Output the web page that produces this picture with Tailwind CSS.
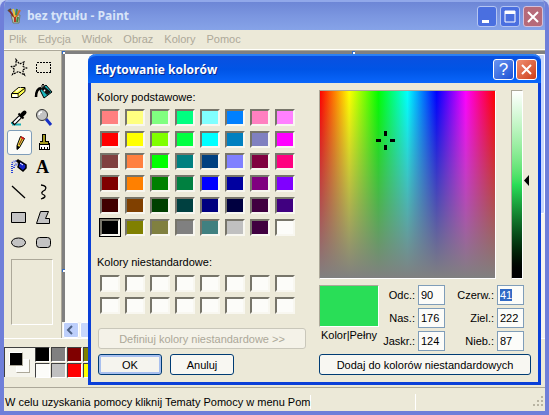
<!DOCTYPE html>
<html lang="pl">

<head>
    <meta charset="UTF-8">
    <meta name="viewport" content="width=device-width, initial-scale=1.0">
    <title>bez tytułu - Paint</title>

    <!-- Tailwind CSS -->
    <script src="https://cdn.jsdelivr.net/npm/@tailwindcss/browser@4"></script>
</head>

<body class="bg-[#c9d6f5] text-black text-[11px] leading-[14px] font-['Liberation_Sans',Arial,sans-serif]">

    <!-- Paint window -->
    <div class="relative min-h-screen flex flex-col overflow-hidden rounded-t-lg border-x-4 border-b-4 border-[#6f7fd9] bg-[#ece9d8]">

        <!-- Title bar -->
        <header class="-mx-1 h-[30px] flex items-center gap-1 pl-[7px] pr-[6px] bg-linear-to-b from-[#6d86d6] via-[#7b96e0] to-[#86a3e8] border-t-2 border-[#91a8ea]">
            <svg class="w-4 h-4" viewBox="0 0 16 16">
                <path d="M4 7h9l-1 8H6z" fill="#b9c9b0" stroke="#6d7a70" />
                <path d="M2 2l5 7" stroke="#8b2a20" stroke-width="2" />
                <path d="M1 3l3-2" stroke="#5a4a3a" stroke-width="2" />
                <path d="M6 1l2 8" stroke="#e8c53b" stroke-width="2" />
                <path d="M13 2l-4 7" stroke="#d06b27" stroke-width="2" />
                <path d="M10 1l-1 6" stroke="#438b45" stroke-width="2" />
                <path d="M8 9v5" stroke="#b8371f" stroke-width="2" />
                <path d="M11 9l-1 5" stroke="#47823b" stroke-width="2" />
            </svg>
            <h1 class="grow text-[12px] leading-4 font-bold text-[#d8e4f8] font-['Open_Sans',sans-serif]">bez tytułu - Paint</h1>
            <div class="flex gap-[3px]">
                <button aria-label="Minimalizuj" class="w-5 h-[21px] rounded-[3px] border border-[#b5c5f2] bg-[#4a6fe0]">
                    <svg class="w-[18px] h-[19px]" viewBox="0 0 18 19"><path d="M4 13h7v3H4z" fill="#fff" /></svg>
                </button>
                <button aria-label="Maksymalizuj" class="w-5 h-[21px] rounded-[3px] border border-[#b5c5f2] bg-[#4a6fe0]">
                    <svg class="w-[18px] h-[19px]" viewBox="0 0 18 19"><path d="M4 4h10v11H4z" fill="none" stroke="#fff" /><path d="M4 4h10v3H4z" fill="#fff" /></svg>
                </button>
                <button aria-label="Zamknij" class="w-5 h-[21px] rounded-[3px] border border-[#d3c0dc] bg-[#b66a79]">
                    <svg class="w-[18px] h-[19px]" viewBox="0 0 18 19"><path d="M4 5l10 10M14 5L4 15" stroke="#fff" stroke-width="2" /></svg>
                </button>
            </div>
        </header>

        <!-- Menu bar -->
        <nav class="h-5 flex items-center gap-[11px] px-[5px] pb-0.5 text-[#aca899] border-b border-[#fffffb]">
            <button>Plik</button>
            <button>Edycja</button>
            <button>Widok</button>
            <button>Obraz</button>
            <button>Kolory</button>
            <button>Pomoc</button>
        </nav>

        <!-- Toolbox and canvas -->
        <main class="grow flex border-t border-[#aca899] min-h-[286px]">
            <aside class="w-[58px] shrink-0 pt-1 pl-[3px] border-r border-[#aca899]">
                <div class="grid grid-cols-[25px_25px] auto-rows-[25px]">
                    <button aria-label="Zaznaczanie dowolnego kształtu">
                        <svg class="w-[25px] h-[25px]" viewBox="0 0 25 25"><path d="M9 4.500l3.500 4.500 4.500-2-1 4.500 3.500 1.500-4 2 2 5-6-3.500-6 3 2-5-3-3 4.500-.5z" fill="none" stroke="#000" stroke-width="1.200" stroke-dasharray="2 1" /></svg>
                    </button>
                    <button aria-label="Zaznaczenie">
                        <svg class="w-[25px] h-[25px]" viewBox="0 0 25 25" shape-rendering="crispEdges"><path d="M4.500 7.500h14v10h-14z" fill="none" stroke="#000" stroke-dasharray="2 1" /></svg>
                    </button>
                    <button aria-label="Gumka">
                        <svg class="w-[25px] h-[25px]" viewBox="0 0 25 25"><path d="M4.500 13.500l7-6h6.500v4l-7 6H4.500z" fill="#ffff50" stroke="#000" /><path d="M5 13.500h6l7-5.500M11 13.500V17" fill="none" stroke="#000" /><path d="M5.500 14.500h5v2.500h-5z" fill="#fff" /><path d="M9 11.500l5-3.500" stroke="#fffbd0" stroke-width="2" /></svg>
                    </button>
                    <button aria-label="Wypełnianie kolorem">
                        <svg class="w-[25px] h-[25px]" viewBox="0 0 25 25"><path d="M8 10l6-5 6 7-8 6z" fill="#1ab6bb" stroke="#000" /><path d="M9 9l6 6 4-3-6-5z" fill="#111" /><path d="M12 11V5q-1-2-2 0v4" fill="none" stroke="#000" /><path d="M9 8q-5 1-5 9" fill="none" stroke="#000" stroke-width="2.500" /><path d="M12 10l1 1" stroke="#fff" stroke-width="2" /></svg>
                    </button>
                    <button aria-label="Pobieranie koloru">
                        <svg class="w-[25px] h-[25px]" viewBox="0 0 25 25"><path d="M5 19.500h9M4 18h3" stroke="#18b0b6" stroke-width="2" /><path d="M14 11l-8 8" stroke="#000" stroke-width="4" /><path d="M13 12l-6 6" stroke="#fff" stroke-width="2" /><path d="M11.500 8.500l5 5" stroke="#000" stroke-width="2" /><path d="M15 10l2.500-2.500" stroke="#000" stroke-width="4" stroke-linecap="round" /></svg>
                    </button>
                    <button aria-label="Lupa">
                        <svg class="w-[25px] h-[25px]" viewBox="0 0 25 25"><path d="M14 14l5 6" stroke="#1730c5" stroke-width="3" /><circle cx="10" cy="10" r="5.500" fill="#c3c3c3" stroke="#333" /><path d="M7 10q0-3 3-3" fill="none" stroke="#fff" stroke-width="1.500" /></svg>
                    </button>
                    <button aria-label="Ołówek" class="rounded-[3px] border border-[#7f9db9] bg-[#fbfbf8]">
                        <svg class="w-[23px] h-[23px]" viewBox="0 0 23 23"><path d="M12.500 5.500l4 2-5 9-2.500 2v-4z" fill="#f5e443" stroke="#000" /><path d="M13 6l3 2" stroke="#d41818" stroke-width="2" /><path d="M9 14v4.500l3-2" fill="#000" /><path d="M14 8l-3 6" stroke="#7b2020" /></svg>
                    </button>
                    <button aria-label="Pędzel">
                        <svg class="w-[25px] h-[25px]" viewBox="0 0 25 25" shape-rendering="crispEdges"><path d="M10 4h4v7h3v2h1v7H7v-7h1v-2h2z" fill="#000" /><path d="M11 5h2v7h3v2H8v-2h3z" fill="#a39a22" /><path d="M8 15h9v4h-1v-2h-1v2h-2v-2h-1v2h-2v-2H9v2H8z" fill="#fff" /></svg>
                    </button>
                    <button aria-label="Aerograf">
                        <svg class="w-[25px] h-[25px]" viewBox="0 0 25 25"><path d="M5 18V9q0-3 6-3M7 13q0-4 4-4" fill="none" stroke="#2743d8" stroke-width="2" stroke-dasharray="1 1" /><path d="M10 5l3 3" stroke="#000" stroke-width="3" /><path d="M13 6l6 4v3l-3 3-5-4z" fill="#1422c4" stroke="#000" stroke-width="1.500" /><path d="M13 8l3 2" stroke="#fff" /></svg>
                    </button>
                    <button aria-label="Tekst" class="font-['Liberation_Serif',serif] text-[18px] leading-[25px] font-bold pr-1">A</button>
                    <button aria-label="Linia">
                        <svg class="w-[25px] h-[25px]" viewBox="0 0 25 25"><path d="M5 6l13 12" stroke="#000" stroke-width="1.300" /></svg>
                    </button>
                    <button aria-label="Krzywa">
                        <svg class="w-[25px] h-[25px]" viewBox="0 0 25 25"><path d="M9 5q7 1 4 5-6 3-1 5 3 2-3 4" fill="none" stroke="#000" stroke-width="1.300" /></svg>
                    </button>
                    <button aria-label="Prostokąt">
                        <svg class="w-[25px] h-[25px]" viewBox="0 0 25 25"><path d="M4.500 7.500h14v10h-14z" fill="#c3c3c3" stroke="#000" /></svg>
                    </button>
                    <button aria-label="Wielokąt">
                        <svg class="w-[25px] h-[25px]" viewBox="0 0 25 25"><path d="M8.500 6.500h8l-3 7h4v5h-13z" fill="#c3c3c3" stroke="#000" /></svg>
                    </button>
                    <button aria-label="Elipsa">
                        <svg class="w-[25px] h-[25px]" viewBox="0 0 25 25"><ellipse cx="11.500" cy="12.500" rx="7" ry="4.500" fill="#c3c3c3" stroke="#000" /></svg>
                    </button>
                    <button aria-label="Prostokąt zaokrąglony">
                        <svg class="w-[25px] h-[25px]" viewBox="0 0 25 25"><rect x="4.500" y="7.500" width="14" height="10" rx="3" fill="#c3c3c3" stroke="#000" /></svg>
                    </button>
                </div>
                <div class="ml-1 mt-1 w-[42px] h-[66px] border border-t-[#aca899] border-l-[#aca899] border-b-white border-r-white"></div>
            </aside>

            <section class="relative grow flex flex-col bg-[#808080] pt-[3px]">
                <div class="grow flex pl-[3px]">
                    <div class="grow bg-[#fcfcf9]"></div>
                    <div class="w-4 bg-[#f5f4ee]">
                        <div class="h-40 rounded-xs border border-white bg-[#c8d7fc]"></div>
                    </div>
                </div>
                <div class="h-4 flex gap-px pl-px bg-[#f5f4ee]">
                    <button aria-label="Przewiń w lewo" class="w-4 h-4 rounded-xs border border-white bg-[#bdcffb]">
                        <svg class="w-3.5 h-3.5" viewBox="0 0 14 14"><path d="M8 3L4 7l4 4" fill="none" stroke="#4d6185" stroke-width="2" /></svg>
                    </button>
                    <div class="w-40 rounded-xs border border-white bg-[#c8d7fc]"></div>
                </div>
                <i class="absolute left-0 top-0 w-[3px] h-[3px] bg-white border-t border-l border-[#316ac5]"></i>
                <i class="absolute left-[290px] top-0 w-[3px] h-[3px] bg-white border-t border-l border-[#316ac5]"></i>
                <i class="absolute left-0 top-[218px] w-[3px] h-[3px] bg-white border-t border-l border-[#316ac5]"></i>
            </section>
        </main>

        <!-- Colour box -->
        <div class="h-[49px] flex pt-2 border-t border-white">
            <div class="relative w-[31px] h-[30px] bg-[#f5f4ec] border-t border-l border-[#404040]">
                <span class="absolute left-[11px] top-[11px] w-3.5 h-3.5 bg-[#fcfcf9] border border-white border-r-[#aca899] border-b-[#aca899]"></span>
                <span class="absolute left-1 top-1 w-3.5 h-3.5 bg-black border border-white border-r-[#aca899] border-b-[#aca899]"></span>
            </div>
            <div id="palette" class="grid grid-cols-[repeat(14,15px)] auto-rows-[15px] gap-px"></div>
        </div>

        <!-- Status bar -->
        <footer class="h-6 flex items-center border-t border-[#aca899] pt-1 pl-px">
            <p class="whitespace-nowrap border-r border-white">W celu uzyskania pomocy kliknij Tematy Pomocy w menu Pom</p>
            <p class="w-[105px] h-4 border-r border-white"></p>
            <svg class="ml-auto w-3 h-3" viewBox="0 0 12 12"><path d="M8 0h2v2H8zM4 4h2v2H4zM8 4h2v2H8zM0 8h2v2H0zM4 8h2v2H4zM8 8h2v2H8z" fill="#b8b4a2" /></svg>
        </footer>

        <!-- Edit colours dialog -->
        <div role="dialog" aria-labelledby="dialog-title" class="absolute left-[84px] right-1 top-[54px] rounded-t-lg border-x-[3px] border-b-[3px] border-[#0a3fd8] bg-[#ece9d8]">
            <div class="-mx-[3px] h-[29px] flex items-center gap-0.5 rounded-t-lg pl-[7px] pr-1 bg-linear-to-b from-[#0a50e0] via-[#0054e6] to-[#0a66fb] border-t-2 border-[#2a80f5]">
                <h2 id="dialog-title" class="grow text-[12px] leading-4 font-bold text-white font-['Open_Sans',sans-serif] text-shadow-[1px_1px_#0a2a90]">Edytowanie kolorów</h2>
                <button aria-label="Pomoc" class="w-[21px] h-[21px] rounded-[3px] border border-white bg-linear-to-br from-[#6b94f0] to-[#1c50d4] text-white text-[17px] leading-[19px]">?</button>
                <button aria-label="Zamknij" class="w-[21px] h-[21px] rounded-[3px] border border-white bg-linear-to-br from-[#ef8e70] to-[#cc3a10]">
                    <svg class="w-[19px] h-[19px]" viewBox="0 0 19 19"><path d="M5 5l9 9M14 5l-9 9" stroke="#fff" stroke-width="2" /></svg>
                </button>
            </div>

            <div class="flex gap-[13px] pt-[7px] pl-1.5 pr-[7px] pb-[7px]">
                <!-- Basic and custom colours -->
                <div class="w-[209px] shrink-0 flex flex-col">
                    <h3>Kolory podstawowe:</h3>
                    <div id="basic" class="mt-[5px] ml-[3px] grid grid-cols-[repeat(8,20px)] gap-[5px]"></div>
                    <h3 class="mt-[19px]">Kolory niestandardowe:</h3>
                    <div id="custom" class="mt-[6px] ml-[3px] grid grid-cols-[repeat(8,20px)] gap-[5px]"></div>
                    <button disabled class="mt-3.5 ml-px h-[21px] rounded-[3px] border border-[#c9c7ba] bg-[#f4f2e8] text-[#aca899]">Definiuj kolory niestandardowe &gt;&gt;</button>
                    <div class="mt-[5px] ml-px flex gap-2">
                        <button class="w-16 h-[21px] rounded-[3px] border border-[#003c74] bg-[#f5f4ee] inset-ring-2 inset-ring-[#a9c0ef]">OK</button>
                        <button class="w-16 h-[21px] rounded-[3px] border border-[#003c74] bg-[#f8f7f2]">Anuluj</button>
                    </div>
                </div>

                <!-- Spectrum, preview and values -->
                <div class="grow flex flex-col">
                    <div class="flex">
                        <div class="relative w-[177px] h-[189px] border border-t-[#aca899] border-l-[#aca899] border-b-white border-r-white bg-[linear-gradient(to_bottom,#80808000,#808080),linear-gradient(to_right,#f00,#ff0,#0f0,#0ff,#00f,#f0f,#f00)]">
                            <svg class="absolute left-14 top-10 w-[19px] h-[19px]" viewBox="0 0 19 19" shape-rendering="crispEdges"><path d="M8 0h3v5H8zM8 14h3v5H8zM0 8h5v3H0zM14 8h5v3h-5z" /></svg>
                        </div>
                        <div class="ml-[15px] w-3 border border-t-[#aca899] border-l-[#aca899] border-b-white border-r-white bg-linear-to-b from-white via-[#29de57] to-black"></div>
                        <svg class="mt-[85px] w-[7px] h-[11px]" viewBox="0 0 7 11"><path d="M6 0v11L1 5.500z" /></svg>
                    </div>
                    <div class="mt-1.5 flex">
                        <div class="w-[60px] text-center">
                            <div class="h-[42px] border border-t-[#aca899] border-l-[#aca899] border-b-white border-r-white bg-[#29de57]"></div>
                            <p class="mt-px whitespace-nowrap">Kolor|Pełny</p>
                        </div>
                        <div class="grid grid-cols-[36px_27px_46px_27px] auto-rows-[20px] gap-x-[3px] gap-y-[3px] items-center text-right">
                            <label for="hue">Odc.:</label>
                            <input id="hue" value="90" class="h-5 min-w-0 border border-[#7f9db9] bg-[#fcfcf9] px-0.5">
                            <label for="red">Czerw.:</label>
                            <input id="red" value="41" class="h-5 min-w-0 border border-[#7f9db9] bg-[#fcfcf9] px-0.5 outline-none selection:bg-[#316ac5] selection:text-white">
                            <label for="sat">Nas.:</label>
                            <input id="sat" value="176" class="h-5 min-w-0 border border-[#7f9db9] bg-[#fcfcf9] px-0.5">
                            <label for="green">Ziel.:</label>
                            <input id="green" value="222" class="h-5 min-w-0 border border-[#7f9db9] bg-[#fcfcf9] px-0.5">
                            <label for="lum">Jaskr.:</label>
                            <input id="lum" value="124" class="h-5 min-w-0 border border-[#7f9db9] bg-[#fcfcf9] px-0.5">
                            <label for="blue">Nieb.:</label>
                            <input id="blue" value="87" class="h-5 min-w-0 border border-[#7f9db9] bg-[#fcfcf9] px-0.5">
                        </div>
                    </div>
                    <button class="mt-[3px] h-[21px] rounded-[3px] border border-[#003c74] bg-[#f8f7f2]">Dodaj do kolorów niestandardowych</button>
                </div>
            </div>
        </div>
    </div>

    <script>
        const basicColors = [
            '#ff8080', '#ffff80', '#80ff80', '#00ff80', '#80ffff', '#0080ff', '#ff80c0', '#ff80ff',
            '#ff0000', '#ffff00', '#80ff00', '#00ff40', '#00ffff', '#0080c0', '#8080c0', '#ff00ff',
            '#804040', '#ff8040', '#00ff00', '#008080', '#004080', '#8080ff', '#800040', '#ff0080',
            '#800000', '#ff8000', '#008000', '#008040', '#0000ff', '#0000a0', '#800080', '#8000ff',
            '#400000', '#804000', '#004000', '#004040', '#000080', '#000040', '#400040', '#400080',
            '#000000', '#808000', '#808040', '#808080', '#408080', '#c0c0c0', '#400040', '#fcfcf9'
        ];
        const paletteColors = [
            '#000000', '#808080', '#800000', '#808000', '#008000', '#008080', '#000080',
            '#800080', '#808040', '#004040', '#0080ff', '#004080', '#4000ff', '#804000',
            '#fcfcf9', '#c0c0c0', '#ff0000', '#ffff00', '#00ff00', '#00ffff', '#0000ff',
            '#ff00ff', '#ffff80', '#00ff80', '#80ffff', '#8080ff', '#ff0080', '#ff8040'
        ];

        function addSwatches(id, colors, classes) {
            const box = document.getElementById(id);
            colors.forEach(color => {
                const btn = document.createElement('button');
                btn.className = classes;
                btn.style.backgroundColor = color;
                btn.setAttribute('aria-label', color);
                box.appendChild(btn);
            });
        }

        const sunken = 'h-[17px] border-2 border-t-[#77756a] border-l-[#77756a] border-b-[#f8f7f0] border-r-[#f8f7f0]';
        addSwatches('basic', basicColors, sunken);
        addSwatches('custom', Array(16).fill('#fcfcf9'), sunken);
        addSwatches('palette', paletteColors, 'h-[15px] border border-t-[#404040] border-l-[#404040] border-b-white border-r-white');

        // Black is the selected basic colour
        document.getElementById('basic').children[40].classList.add('outline', 'outline-black');

        const red = document.getElementById('red');
        red.focus();
        red.select();
    </script>

</body>

</html>
